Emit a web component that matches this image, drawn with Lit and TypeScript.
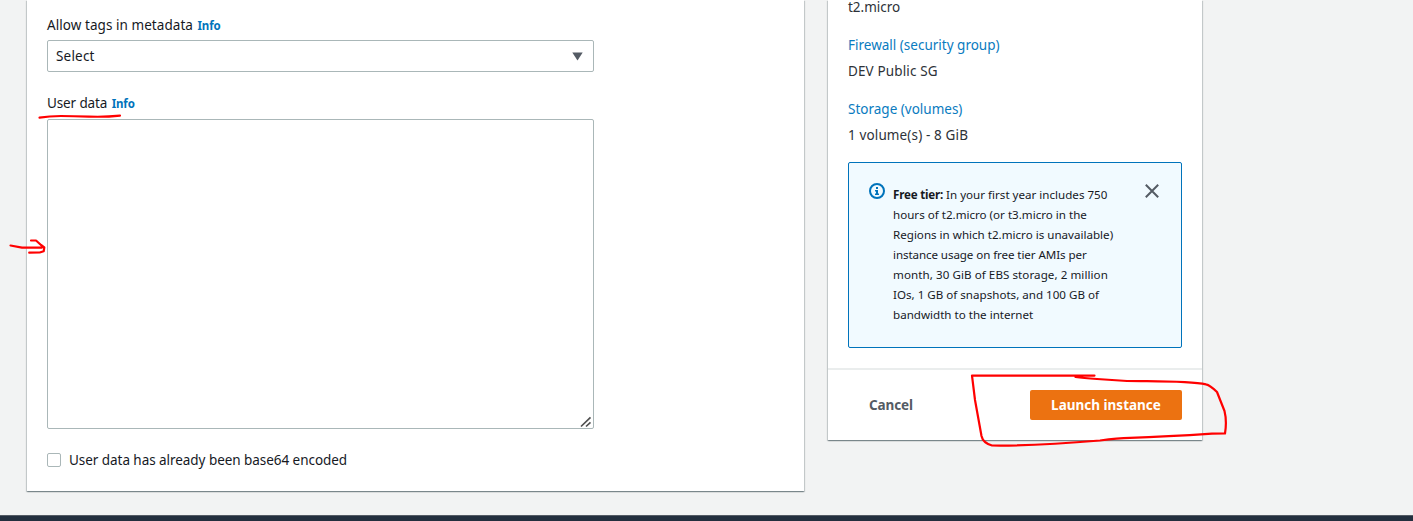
import { LitElement, html, css } from "lit";
import { customElement } from "lit/decorators.js";

@customElement("app-root")
class AppRoot extends LitElement {
  static styles = css`
    :host {
      display: block;
      position: relative;
      height: 521px;
      overflow: hidden;
      background: #f2f3f3;
      color: #16191f;
      font: 13.5px/22px "Noto Sans", sans-serif;
      white-space: nowrap;
    }
    * { box-sizing: border-box; }
    .page {
      display: flex;
      align-items: flex-start;
      gap: 24px;
      height: 515px;
      padding-left: 27px;
    }
    .panel {
      background: #fff;
      box-shadow: 0 1px 1px 0 rgba(0, 28, 36, 0.3), 1px 1px 1px 0 rgba(0, 28, 36, 0.15),
        -1px 1px 1px 0 rgba(0, 28, 36, 0.15);
    }
    .main { width: 777px; height: 491px; padding: 14px 20px 20px; }
    .info {
      margin-left: 4.500px;
      color: #0073bb;
      font-size: 11.5px;
      font-weight: 700;
      letter-spacing: -0.15px;
    }
    .label { height: 22px; margin-bottom: 4px; letter-spacing: 0.06px; }
    .user { margin-bottom: 5px; letter-spacing: -0.13px; }
    .select {
      display: flex;
      align-items: center;
      justify-content: space-between;
      width: 547px;
      height: 32px;
      margin-bottom: 20px;
      padding: 0 10.500px 0 8px;
      border: 1px solid #aab7b8;
      border-radius: 2px;
      letter-spacing: 0.2px;
    }
    .select svg, .icon { display: block; }
    .area {
      display: flex;
      align-items: flex-end;
      justify-content: flex-end;
      width: 547px;
      height: 310px;
      margin-bottom: 20px;
      padding: 0 1px 0 0;
      border: 1px solid #aab7b8;
      border-radius: 2px;
    }
    .check { display: flex; align-items: center; gap: 8px; letter-spacing: -0.05px; }
    .box { width: 14px; height: 14px; border: 1px solid #aab7b8; border-radius: 2px; }
    .side { width: 374px; height: 440px; display: flex; flex-direction: column; }
    .body { flex: 1; padding: 0 20px; color: #2d3238; }
    .value { height: 22px; margin-bottom: 16px; }
    .first { height: 18px; line-height: 14px; }
    .link { height: 22px; margin-bottom: 4px; color: #0a7bc0; }
    .wide { letter-spacing: 0.13px; }
    .alert {
      display: flex;
      width: 334px;
      height: 186px;
      padding: 19px 22px 0 20px;
      border: 1px solid #0073bb;
      border-radius: 2px;
      background: #f1faff;
    }
    .text {
      flex: 1;
      padding: 3px 0 0 8px;
      color: #16191f;
      font-size: 11.6px;
      line-height: 20px;
    }
    .text b { letter-spacing: -0.2px; }
    .tight { letter-spacing: -0.09px; }
    .loose { letter-spacing: 0.065px; }
    .foot {
      display: flex;
      align-items: center;
      justify-content: space-between;
      height: 72px;
      padding: 0 20px 0 41px;
      border-top: 2px solid #eaeded;
      font-weight: 700;
    }
    .cancel { color: #545b64; letter-spacing: -0.1px; }
    .launch {
      width: 152px;
      height: 30px;
      border-radius: 2px;
      background: #ec7211;
      color: #fff;
      line-height: 30px;
      text-align: center;
    }
    .bar { height: 6px; background: #232f3e; border-top: 1px solid #545b64; }
    .ink { position: absolute; top: 0; left: 0; pointer-events: none; }
  `;

  render() {
    return html`
      <div class="page">
        <section class="panel main">
          <div class="label">Allow tags in metadata<span class="info">Info</span></div>
          <div class="select">
            <span>Select</span>
            <svg width="11" height="9" viewBox="0 0 11 9"><path d="M.3.4h10.4L5.5 8.6Z" fill="#545b64" /></svg>
          </div>
          <div class="label user">User data<span class="info">Info</span></div>
          <div class="area">
            <svg width="12" height="12" viewBox="0 0 12 12" fill="none" stroke="#505050" stroke-width="1.7">
              <path d="M1 10.500 10.500 1.300M6 10.500 10.500 6.300" />
            </svg>
          </div>
          <div class="check"><span class="box"></span><span>User data has already been base64 encoded</span></div>
        </section>
        <aside class="panel side">
          <div class="body">
            <div class="value first">t2.micro</div>
            <div class="link">Firewall (security group)</div>
            <div class="value wide">DEV Public SG</div>
            <div class="link">Storage (volumes)</div>
            <div class="value wide">1 volume(s) - 8 GiB</div>
            <div class="alert">
              <svg class="icon" width="16" height="18" viewBox="0 0 16 18">
                <circle cx="8" cy="9" r="7" fill="none" stroke="#0073bb" stroke-width="2" />
                <path d="M7 5h2v2H7zM6 8h3v3.400h1V13H6v-1.600h1V9.500H6z" fill="#0073bb" />
              </svg>
              <div class="text">
                <div><b>Free tier:</b> In your first year includes 750</div>
                <div>hours of t2.micro (or t3.micro in the</div>
                <div>Regions in which t2.micro is unavailable)</div>
                <div class="tight">instance usage on free tier AMIs per</div>
                <div class="loose">month, 30 GiB of EBS storage, 2 million</div>
                <div>IOs, 1 GB of snapshots, and 100 GB of</div>
                <div>bandwidth to the internet</div>
              </div>
              <svg class="icon" width="14" height="18" viewBox="0 0 14 18" fill="none" stroke="#545b64" stroke-width="2">
                <path d="m.8 2.800 12.400 12.400M13.200 2.800.8 15.200" />
              </svg>
            </div>
          </div>
          <div class="foot"><span class="cancel">Cancel</span><span class="launch">Launch instance</span></div>
        </aside>
      </div>
      <div class="bar"></div>
      <svg class="ink" width="1413" height="521" viewBox="0 0 1413 521" fill="none" stroke="#f00" stroke-width="2.2" stroke-linecap="round" stroke-linejoin="round">
        <path d="M39.500 117.600Q49 116 61 116T89 116.600T120 115.600" />
        <path d="M10.500 245.500 22 247.600H42M31 240.500h5L41 245l3.300 2.500-.6 3.800-4 1.200-10.500.2" />
        <path d="M1094.500 375.600H972L975 400 981.500 436Q983 443 992 445.500C1030 446 1065 443.500 1100 440.500Q1118 438 1130 437.800C1160 437 1193 435 1212 433.700L1225 433.500Q1227 421 1224.500 411L1217 392Q1210 385 1206 384.300C1190 381 1165 381.500 1127 381L1097 379Q1083 378 1075.500 377" />
      </svg>
    `;
  }
}
